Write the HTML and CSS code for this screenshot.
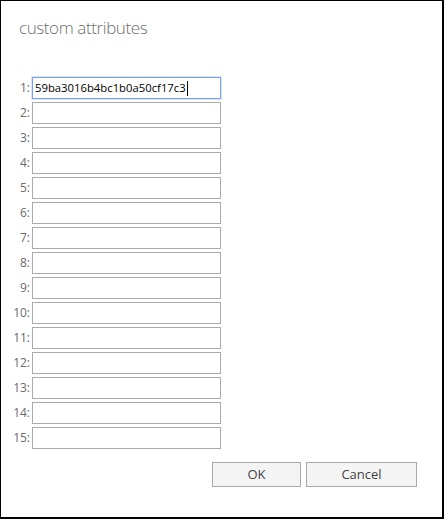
FILE: index.html
```html
<!DOCTYPE html>
<html lang="en">
<head>
<meta charset="utf-8">
<title>custom attributes</title>
<link rel="stylesheet" href="styles.css">
</head>
<body>
<div class="dialog">
  <h1 class="title">custom attributes</h1>
  <div class="rows">
    <label class="lbl">1:</label><div class="field focused">59ba3016b4bc1b0a50cf17c3<span class="caret"></span></div>
    <label class="lbl">2:</label><input class="field" type="text">
    <label class="lbl">3:</label><input class="field" type="text">
    <label class="lbl">4:</label><input class="field" type="text">
    <label class="lbl">5:</label><input class="field" type="text">
    <label class="lbl">6:</label><input class="field" type="text">
    <label class="lbl">7:</label><input class="field" type="text">
    <label class="lbl">8:</label><input class="field" type="text">
    <label class="lbl">9:</label><input class="field" type="text">
    <label class="lbl">10:</label><input class="field" type="text">
    <label class="lbl">11:</label><input class="field" type="text">
    <label class="lbl">12:</label><input class="field" type="text">
    <label class="lbl">13:</label><input class="field" type="text">
    <label class="lbl">14:</label><input class="field" type="text">
    <label class="lbl">15:</label><input class="field" type="text">
  </div>
  <div class="actions">
    <button class="btn btn-ok" type="button">OK</button>
    <button class="btn btn-cancel" type="button">Cancel</button>
  </div>
</div>
</body>
</html>
```
FILE: styles.css
```css
html, body {
  margin: 0;
  padding: 0;
  background: #ffffff;
}
.dialog {
  box-sizing: border-box;
  width: 444px;
  height: 519px;
  border-style: solid;
  border-color: #000000;
  border-width: 1px 2px 2px 1px;
  padding-top: 14px;
  font-family: "Open Sans", "Noto Sans", sans-serif;
  background: #ffffff;
}
.title {
  margin: 0 0 0 18px;
  font-size: 17px;
  letter-spacing: -0.4px;
  line-height: 26px;
  font-weight: 300;
  color: #6f6f6f;
}
.rows {
  margin-top: 36px;
  display: grid;
  grid-template-columns: 29px 189px;
  column-gap: 2px;
  row-gap: 3px;
}
.lbl {
  font-size: 12px;
  line-height: 22px;
  color: #6a6a6a;
  text-align: right;
}
.field {
  box-sizing: border-box;
  width: 189px;
  height: 22px;
  margin: 0;
  border: 1px solid #ababab;
  padding: 0 2px;
  font-family: "Open Sans", "Noto Sans", sans-serif;
  font-size: 11.3px;
  line-height: 20px;
  color: #000000;
  background: #ffffff;
  outline: none;
  border-radius: 0;
}
.focused {
  border-color: #79a2e6;
  box-shadow: 0 0 0 0.5px #b8cdf2;
  display: flex;
  align-items: center;
  white-space: nowrap;
}
.caret {
  display: inline-block;
  width: 1px;
  height: 15px;
  background: #000000;
  margin-left: 1px;
}
.actions {
  margin-top: 13px;
  display: flex;
  justify-content: flex-end;
  gap: 5px;
  padding-right: 25px;
}
.btn {
  box-sizing: border-box;
  height: 25px;
  margin: 0;
  padding: 0;
  border: 1px solid #a3abab;
  border-radius: 0;
  background: #f4f4f4;
  color: #444444;
  font-family: "Open Sans", "Noto Sans", sans-serif;
  font-size: 13px;
  line-height: 23px;
}
.btn-ok {
  width: 89px;
}
.btn-cancel {
  width: 111px;
}
```
